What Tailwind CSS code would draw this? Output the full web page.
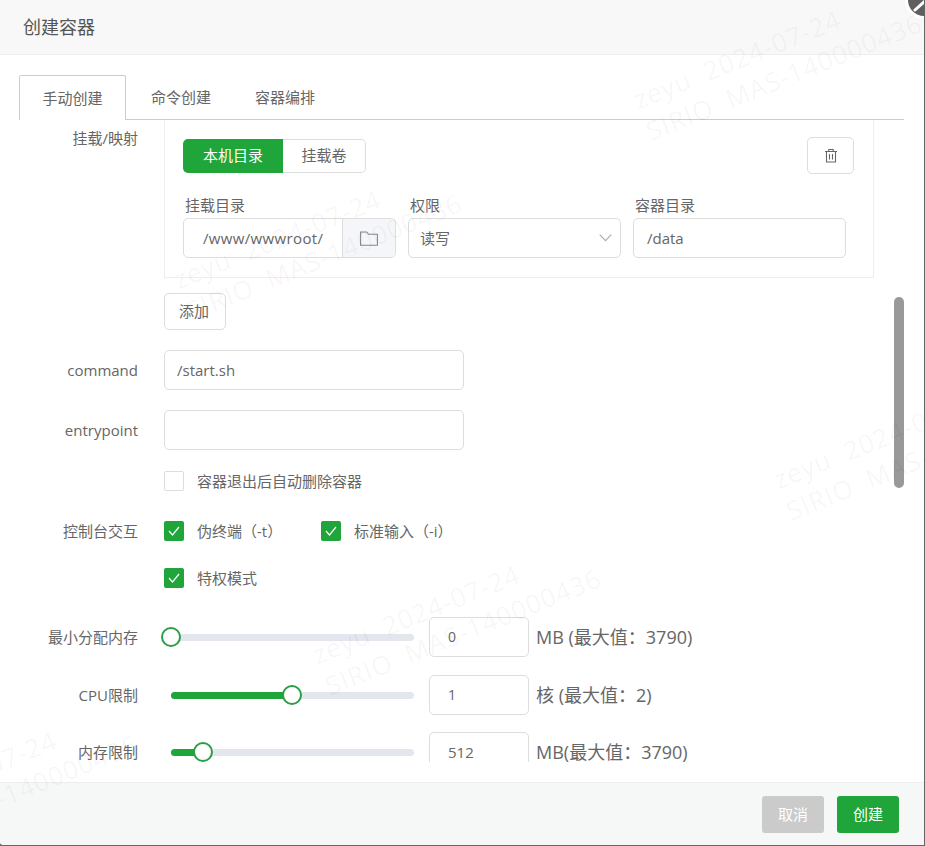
<!DOCTYPE html>
<html lang="zh">
<head>
<meta charset="utf-8">
<script src="https://cdn.jsdelivr.net/npm/@tailwindcss/browser@4"></script>
</head>
<body class="bg-[#666]">
<div class="relative flex h-[846px] w-[925px] flex-col overflow-hidden rounded-bl-[4px] border-r border-b border-[#666] bg-white font-['Open_Sans','Noto_Sans_CJK_SC',sans-serif] text-[15px] text-[#666]">
  <!-- header -->
  <header class="flex h-[55px] shrink-0 items-center border-b border-[#eee] bg-[#f8f8f8] pl-[23px] text-lg text-[#555]">创建容器</header>

  <!-- tabs -->
  <div class="mt-5 mr-[20px] ml-[19px] flex h-[45px] shrink-0 border-b border-[#ccc]">
    <div class="-mb-px flex h-[45px] w-[107px] items-center justify-center rounded-t-[2px] border border-b-0 border-[#ccc] bg-white">手动创建</div>
    <div class="ml-[25px] flex h-[44px] items-center">命令创建</div>
    <div class="ml-[44px] flex h-[44px] items-center">容器编排</div>
  </div>

  <!-- scroll body -->
  <main class="relative h-[642px] shrink-0 overflow-hidden">
    <!-- scrollbar -->
    <div class="absolute top-[177px] left-[894px] h-[191px] w-2.5 rounded-full bg-[#999]"></div>

    <!-- 挂载/映射 -->
    <section class="flex">
      <div class="w-[138px] pt-[8px] text-right leading-[20px]">挂载/映射</div>
      <div class="ml-[26px] flex h-[158px] w-[710px] flex-col border-x border-b border-[#eee] px-[18px] pt-[17px]">
        <div class="flex items-start justify-between pr-[1px]">
          <div class="mt-[2px] flex h-[34px]">
            <div class="flex w-[100px] items-center justify-center rounded-l-[5px] bg-[#20a53a] pb-[2px] text-white">本机目录</div>
            <div class="flex w-[83px] items-center justify-center rounded-r-[5px] border border-l-0 border-[#ddd] pb-[2px]">挂载卷</div>
          </div>
          <button class="flex h-[37px] w-[47px] items-center justify-center rounded-[5px] border border-[#ddd]">
            <svg width="14" height="15" viewBox="0 0 14 15" fill="none" stroke="#666" stroke-width="1.1"><path d="M1 3.5h12M4.8 3.5V1.5h4.4v2M2.5 3.5v10.5h9V3.5M5.5 6v5.5M8.5 6v5.5"/></svg>
          </button>
        </div>
        <div class="mt-[20px] grid grid-cols-[213px_213px_213px] gap-x-3">
          <div>
            <div class="h-[24px] pl-[2px] leading-[22px]">挂载目录</div>
            <div class="flex h-10 rounded-[5px] border border-[#ddd]">
              <div class="flex w-[158px] items-center pl-[19px] tracking-[0.35px]">/www/wwwroot/</div>
              <div class="flex flex-1 items-center justify-center rounded-r-[5px] border-l border-[#ddd] bg-[#f5f6fa]">
                <svg width="18" height="15" viewBox="0 0 18 15" fill="none" stroke="#888" stroke-width="1.1"><path d="M.6 1h6l2 2.2h8.8v11H.6z"/></svg>
              </div>
            </div>
          </div>
          <div>
            <div class="h-[24px] pl-[2px] leading-[22px]">权限</div>
            <div class="flex h-10 items-center justify-between rounded-[5px] border border-[#ddd] pr-[8px] pl-[11px]">
              <span>读写</span>
              <svg width="13" height="8" viewBox="0 0 13 8" fill="none" stroke="#aaa" stroke-width="1.1"><path d="M.7.7l5.8 6 5.8-6"/></svg>
            </div>
          </div>
          <div>
            <div class="h-[24px] pl-[2px] leading-[22px]">容器目录</div>
            <div class="flex h-10 items-center rounded-[5px] border border-[#ddd] pl-[13px]">/data</div>
          </div>
        </div>
      </div>
    </section>

    <div class="mt-[15px] ml-[164px] flex h-[37px] w-[62px] items-center justify-center rounded-[5px] border border-[#ddd] pr-[2px] pb-[1px]">添加</div>

    <!-- text inputs -->
    <div class="mt-5 flex items-center">
      <div class="w-[138px] pt-[1px] text-right">command</div>
      <div class="ml-[26px] flex h-10 w-[300px] items-center rounded-[5px] border border-[#ddd] pt-[1px] pl-3">/start.sh</div>
    </div>
    <div class="mt-5 flex items-center">
      <div class="w-[138px] pt-[1px] text-right">entrypoint</div>
      <div class="ml-[26px] h-10 w-[300px] rounded-[5px] border border-[#ddd]"></div>
    </div>

    <!-- checkboxes -->
    <div class="mt-[21px] ml-[164px] flex h-5 items-center gap-[13px]">
      <span class="h-5 w-5 rounded-[2px] border border-[#ddd]"></span>
      <span>容器退出后自动删除容器</span>
    </div>
    <div class="mt-[30px] flex h-5 items-center">
      <div class="w-[138px] text-right">控制台交互</div>
      <div class="ml-[26px] flex w-[157px] items-center gap-[13px]">
        <span class="flex h-5 w-5 items-center justify-center rounded-[2px] bg-[#20a53a]"><svg width="12" height="10" viewBox="0 0 12 10" fill="none" stroke="#fff" stroke-width="1.2"><path d="M1 5l3.5 4L11 1"/></svg></span>
        <span>伪终端（-t）</span>
      </div>
      <div class="flex items-center gap-[13px]">
        <span class="flex h-5 w-5 items-center justify-center rounded-[2px] bg-[#20a53a]"><svg width="12" height="10" viewBox="0 0 12 10" fill="none" stroke="#fff" stroke-width="1.2"><path d="M1 5l3.5 4L11 1"/></svg></span>
        <span>标准输入（-i）</span>
      </div>
    </div>
    <div class="mt-[27px] ml-[164px] flex h-5 items-center gap-[13px]">
      <span class="flex h-5 w-5 items-center justify-center rounded-[2px] bg-[#20a53a]"><svg width="12" height="10" viewBox="0 0 12 10" fill="none" stroke="#fff" stroke-width="1.2"><path d="M1 5l3.5 4L11 1"/></svg></span>
      <span>特权模式</span>
    </div>

    <!-- sliders -->
    <div class="mt-[29px] flex h-10 items-center">
      <div class="w-[138px] text-right">最小分配内存</div>
      <div class="relative ml-[33px] h-[7px] w-[243px] rounded-full bg-[#e3e6ec]">
        <span class="absolute top-1/2 left-[-10px] h-5 w-5 -translate-y-1/2 rounded-full border-2 border-[#2c9e47] bg-white"></span>
      </div>
      <div class="ml-[15px] flex h-10 w-[100px] items-center rounded-[5px] border border-[#ddd] pl-[18px] text-sm">0</div>
      <div class="ml-[7px] text-lg">MB (最大值：3790)</div>
    </div>
    <div class="mt-[18px] flex h-10 items-center">
      <div class="w-[138px] text-right">CPU限制</div>
      <div class="relative ml-[33px] h-[7px] w-[243px] rounded-full bg-[#e3e6ec]">
        <span class="absolute top-0 left-0 h-[7px] w-[121px] rounded-full bg-[#20a53a]"></span>
        <span class="absolute top-1/2 left-[111px] h-5 w-5 -translate-y-1/2 rounded-full border-2 border-[#2c9e47] bg-white"></span>
      </div>
      <div class="ml-[15px] flex h-10 w-[100px] items-center rounded-[5px] border border-[#ddd] pl-[18px] text-sm">1</div>
      <div class="ml-[7px] text-lg">核 (最大值：2)</div>
    </div>
    <div class="mt-[17px] flex h-10 items-center">
      <div class="w-[138px] text-right">内存限制</div>
      <div class="relative ml-[33px] h-[7px] w-[243px] rounded-full bg-[#e3e6ec]">
        <span class="absolute top-0 left-0 h-[7px] w-[32px] rounded-full bg-[#20a53a]"></span>
        <span class="absolute top-1/2 left-[22px] h-5 w-5 -translate-y-1/2 rounded-full border-2 border-[#2c9e47] bg-white"></span>
      </div>
      <div class="ml-[15px] flex h-10 w-[100px] items-center rounded-[5px] border border-[#ddd] pl-[18px]">512</div>
      <div class="ml-[7px] text-lg">MB(最大值：3790)</div>
    </div>
  </main>

  <div class="h-5 shrink-0 bg-white"></div>

  <!-- footer -->
  <footer class="flex flex-1 items-start justify-end gap-[13px] border-t border-[#eee] bg-[#f6f8f8] pt-[13px] pr-[25px]">
    <button class="flex h-[37px] w-[62px] items-center justify-center rounded-[3px] bg-[#cbcbcb] text-white">取消</button>
    <button class="flex h-[37px] w-[62px] items-center justify-center rounded-[3px] bg-[#20a53a] text-white">创建</button>
  </footer>

  <!-- watermarks -->
  <div class="pointer-events-none absolute inset-0 overflow-hidden text-[26px] leading-[34px] tracking-[1px] whitespace-pre text-black/[0.045]">
    <div class="absolute top-[82px] left-[641px] origin-left -rotate-[22deg]">zeyu  2024-07-24<br>SIRIO  MAS-140000436</div>
    <div class="absolute top-[262px] left-[181px] origin-left -rotate-[22deg]">zeyu  2024-07-24<br>SIRIO  MAS-140000436</div>
    <div class="absolute top-[462px] left-[781px] origin-left -rotate-[22deg]">zeyu  2024-07-24<br>SIRIO  MAS-140000436</div>
    <div class="absolute top-[637px] left-[320px] origin-left -rotate-[22deg]">zeyu  2024-07-24<br>SIRIO  MAS-140000436</div>
    <div class="absolute top-[803px] left-[-143px] origin-left -rotate-[22deg]">zeyu  2024-07-24<br>SIRIO  MAS-140000436</div>
  </div>

  <!-- close button -->
  <div class="absolute top-[-19px] right-[-19px] h-[38px] w-[38px] rounded-full border-[3px] border-white bg-[#5f5f5f]">
    <svg class="absolute top-0 left-0" width="32" height="32" viewBox="0 0 32 32" fill="none" stroke="#fff" stroke-width="3" stroke-linecap="round"><path d="M7 26L17 17"/></svg>
  </div>
</div>
</body>
</html>
